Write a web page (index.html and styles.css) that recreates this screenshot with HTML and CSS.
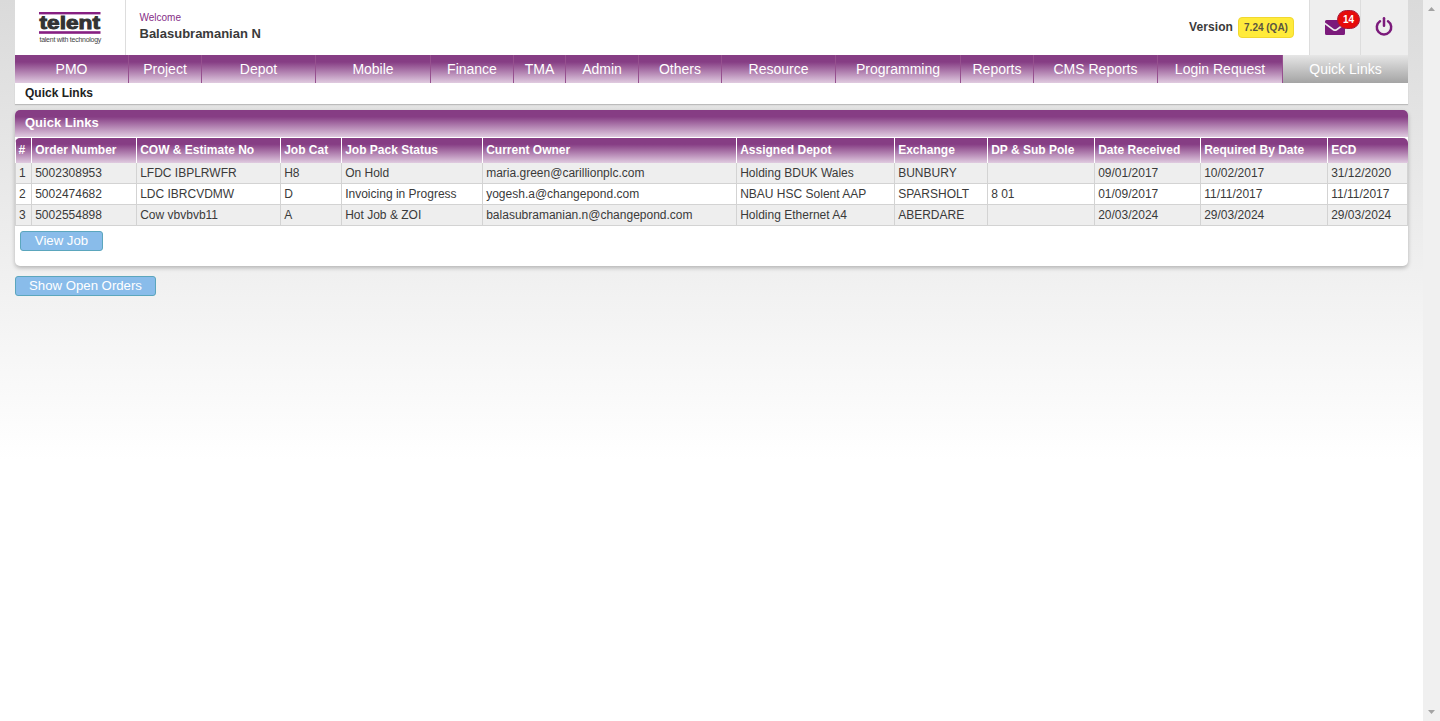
FILE: index.html
```html
<!DOCTYPE html>
<html lang="en">
<head>
<meta charset="utf-8">
<title>Quick Links</title>
<link rel="stylesheet" href="styles.css">
</head>
<body>
<div class="app">
  <main class="page">
    <header class="topbar">
      <div class="logo">
        <svg width="80" height="40" viewBox="0 0 80 40">
          <rect x="1" y="1" width="61.5" height="2.4" fill="#861f82"/>
          <text x="1.5" y="18" class="logo-name" textLength="60.5" lengthAdjust="spacingAndGlyphs">telent</text>
          <rect x="1" y="20.2" width="61.5" height="2.6" fill="#861f82"/>
          <text x="1.5" y="31" class="logo-tag">talent with technology</text>
        </svg>
      </div>
      <div class="user">
        <span class="welcome">Welcome</span>
        <span class="username">Balasubramanian N</span>
      </div>
      <div class="version"><span class="version-label">Version</span><span class="version-tag">7.24 (QA)</span></div>
      <div class="tool mail">
        <svg width="20" height="15" viewBox="0 0 20 15"><path d="M0 1.5Q0 0 1.5 0H18.5Q20 0 20 1.5V2.6L11.5 8.8Q10 9.8 8.5 8.8L0 2.6ZM0 4.6L8 10.4Q10 11.8 12 10.4L20 4.6V13.5Q20 15 18.5 15H1.5Q0 15 0 13.5Z" fill="#7b1a7b"/></svg>
        <span class="badge">14</span>
      </div>
      <div class="tool power">
        <svg width="18" height="19" viewBox="0 0 18 19" fill="none" stroke="#7b1a7b" stroke-width="2.5" stroke-linecap="round"><path d="M5 4.3A7.2 7.2 0 1 0 13 4.3"/><path d="M9 1.3V8.8"/></svg>
      </div>
    </header>
    <nav class="menu">
      <a>PMO</a><a>Project</a><a>Depot</a><a>Mobile</a><a>Finance</a><a>TMA</a><a>Admin</a><a>Others</a><a>Resource</a><a>Programming</a><a>Reports</a><a>CMS Reports</a><a>Login Request</a><a class="active">Quick Links</a>
    </nav>
    <div class="crumb">Quick Links</div>
    <section class="panel">
      <h2 class="panel-title">Quick Links</h2>
      <div class="grid">
        <div class="row head"><span>#</span><span>Order Number</span><span>COW &amp; Estimate No</span><span>Job Cat</span><span>Job Pack Status</span><span>Current Owner</span><span>Assigned Depot</span><span>Exchange</span><span>DP &amp; Sub Pole</span><span>Date Received</span><span>Required By Date</span><span>ECD</span></div>
        <div class="row shaded"><span>1</span><span>5002308953</span><span>LFDC IBPLRWFR</span><span>H8</span><span>On Hold</span><span>maria.green@carillionplc.com</span><span>Holding BDUK Wales</span><span>BUNBURY</span><span></span><span>09/01/2017</span><span>10/02/2017</span><span>31/12/2020</span></div>
        <div class="row"><span>2</span><span>5002474682</span><span>LDC IBRCVDMW</span><span>D</span><span>Invoicing in Progress</span><span>yogesh.a@changepond.com</span><span>NBAU HSC Solent AAP</span><span>SPARSHOLT</span><span>8 01</span><span>01/09/2017</span><span>11/11/2017</span><span>11/11/2017</span></div>
        <div class="row shaded"><span>3</span><span>5002554898</span><span>Cow vbvbvb11</span><span>A</span><span>Hot Job &amp; ZOI</span><span>balasubramanian.n@changepond.com</span><span>Holding Ethernet A4</span><span>ABERDARE</span><span></span><span>20/03/2024</span><span>29/03/2024</span><span>29/03/2024</span></div>
      </div>
      <button class="btn view">View Job</button>
    </section>
    <button class="btn open">Show Open Orders</button>
  </main>
  <aside class="scrollbar">
    <svg width="7" height="4" viewBox="0 0 7 4"><path d="M0 4L3.5 0L7 4Z" fill="#a3a3a3"/></svg>
    <svg width="7" height="4" viewBox="0 0 7 4"><path d="M0 0L3.5 4L7 0Z" fill="#a3a3a3"/></svg>
  </aside>
</div>
</body>
</html>
```
FILE: styles.css
```css
* { box-sizing: border-box; }
body { margin: 0; font-family: "Liberation Sans", Arial, sans-serif; font-size: 12px; color: #3a3a3a; }
.app { display: flex; height: 721px; overflow: hidden; background: linear-gradient(#dadada 0, #fff 460px); }
.page { width: 1408px; padding-left: 15px; flex: none; }
.scrollbar { margin-left: auto; width: 17px; background: #f0f0f0; display: flex; flex-direction: column; justify-content: space-between; align-items: center; padding: 7px 0; }

.topbar { display: flex; height: 55px; background: #fff; }
.logo { width: 111px; border-right: 1px solid #ddd; padding: 11px 0 0 23px; }
.logo svg { display: block; }
.logo-name { font: bold 18px "Liberation Sans", Arial, sans-serif; fill: #333; stroke: #333; stroke-width: .9px; }
.logo-tag { font: 7px "Liberation Sans", Arial, sans-serif; fill: #444; letter-spacing: -.26px; }
.user { display: flex; flex-direction: column; padding: 12px 0 0 13.5px; }
.welcome { font-size: 10px; line-height: 12px; color: #862d86; }
.username { font-size: 13px; line-height: 19px; font-weight: bold; }
.version { margin-left: auto; display: flex; padding: 17px 15px 0 0; gap: 5px; font-weight: bold; }
.version-label { line-height: 20px; letter-spacing: .1px; }
.version-tag { height: 21px; width: 56px; border: 1px solid #f1d830; border-radius: 4px; background: #ffeb3b; font-size: 10px; line-height: 20px; text-align: center; color: #5a5540; }
.tool { position: relative; background: #eee; border-left: 1px solid #ddd; }
.tool svg { display: block; }
.mail { width: 51px; padding: 20px 0 0 15px; }
.power { width: 48px; padding: 17px 0 0 14px; }
.badge { position: absolute; left: 27px; top: 10px; width: 23px; height: 19px; border: 1px solid #a51a3b; border-radius: 10px; background: #e60b0b; color: #fff; font-size: 10px; font-weight: bold; line-height: 18px; text-align: center; }

.menu { display: grid; grid-template-columns: 114px 73px 114px 115px 83px 52px 73px 83px 114px 125px 73px 124px 125px 125px; height: 28px; }
.menu a { border-right: 1px solid #96508f; color: #fff; font-size: 14px; line-height: 28px; text-align: center; white-space: nowrap; background: linear-gradient(#863d84 25%, #e0cbe0); }
.menu .active { border: 0; background: linear-gradient(#e6e6e6, #a4a4a4); }

.crumb { height: 21px; padding-left: 10px; background: #fff; color: #222; font-weight: bold; line-height: 20px; box-shadow: 0 1px 1px #bbb; }
.panel { margin-top: 6px; height: 156px; background: #fff; border-radius: 5px; box-shadow: 0 2px 4px rgba(0,0,0,.25); overflow: hidden; }
.panel-title { margin: 0; height: 27px; padding-left: 10px; color: #fff; font-size: 13px; line-height: 25px; background: linear-gradient(#863d84 25%, #e0cbe0); }
.grid { margin-top: 1px; }
.row { display: grid; grid-template-columns: 17px 105px 144px 61px 141px 254px 158px 93px 107px 106px 127px 80px; height: 21px; line-height: 20px; }
.row span { border-right: 1px solid #d3d3d3; border-bottom: 1px solid #d3d3d3; padding-left: 3.2px; white-space: nowrap; }
.row span:first-child { border-left: 1px solid #d3d3d3; padding-left: 3px; }
.row.shaded { background: #eee; }
.row.head { height: 25px; line-height: 25px; font-weight: bold; color: #fff; background: linear-gradient(#863d84 25%, #e0cbe0); border-radius: 5px 5px 0 0; overflow: hidden; }
.row.head span { border-color: #fff; border-bottom: 0; }
.row.head span:first-child { padding-left: 2.4px; border-left-color: #fff; }
.row.head span:last-child { border-right: 0; }

.btn { display: block; height: 20px; padding: 0; border: 1px solid #5ba6bd; border-radius: 3px; background: #89bcea; color: #fff; font: 13.2px/18px "Liberation Sans", Arial, sans-serif; }
.view { width: 83px; margin: 5px 0 0 5px; }
.open { width: 141px; margin-top: 10px; }
```
